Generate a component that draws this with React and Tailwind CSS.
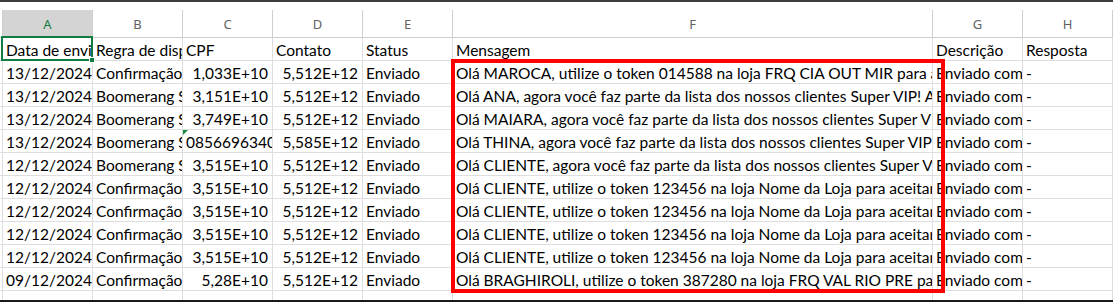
import React from 'react';

const cols = ['A', 'B', 'C', 'D', 'E', 'F', 'G', 'H'];

const rows = [
  ['13/12/2024', 'Confirmação de token', '1,033E+10', '5,512E+12', 'Enviado', 'Olá MAROCA, utilize o token 014588 na loja FRQ CIA OUT MIR para aceitar o desconto.'],
  ['13/12/2024', 'Boomerang Super VIP', '3,151E+10', '5,512E+12', 'Enviado', 'Olá ANA, agora você faz parte da lista dos nossos clientes Super VIP! Aproveite.'],
  ['13/12/2024', 'Boomerang Super VIP', '3,749E+10', '5,512E+12', 'Enviado', 'Olá MAIARA, agora você faz parte da lista dos nossos clientes Super VIP! Aproveite.'],
  ['13/12/2024', 'Boomerang Super VIP', '08566963400', '5,585E+12', 'Enviado', 'Olá THINA, agora você faz parte da lista dos nossos clientes Super VIP! Aproveite.', true],
  ['12/12/2024', 'Boomerang Super VIP', '3,515E+10', '5,512E+12', 'Enviado', 'Olá CLIENTE, agora você faz parte da lista dos nossos clientes Super VIP! Aproveite.'],
  ['12/12/2024', 'Confirmação de token', '3,515E+10', '5,512E+12', 'Enviado', 'Olá CLIENTE, utilize o token 123456 na loja Nome da Loja para aceitar o desconto.'],
  ['12/12/2024', 'Confirmação de token', '3,515E+10', '5,512E+12', 'Enviado', 'Olá CLIENTE, utilize o token 123456 na loja Nome da Loja para aceitar o desconto.'],
  ['12/12/2024', 'Confirmação de token', '3,515E+10', '5,512E+12', 'Enviado', 'Olá CLIENTE, utilize o token 123456 na loja Nome da Loja para aceitar o desconto.'],
  ['12/12/2024', 'Confirmação de token', '3,515E+10', '5,512E+12', 'Enviado', 'Olá CLIENTE, utilize o token 123456 na loja Nome da Loja para aceitar o desconto.'],
  ['09/12/2024', 'Confirmação de token', '5,28E+10', '5,512E+12', 'Enviado', 'Olá BRAGHIROLI, utilize o token 387280 na loja FRQ VAL RIO PRE para aceitar o desconto.'],
];

const grid = 'grid grid-cols-[3px_90px_90px_90px_90px_90px_480px_90px_90px]';

function Cell({ children, right, className = '' }) {
  return (
    <div
      className={`relative overflow-hidden whitespace-nowrap border-r border-b border-[#dedede] px-[3px] pt-px leading-[22px] ${right ? 'text-right pr-[4px]' : ''} ${className}`}
    >
      {children}
    </div>
  );
}

export default function App() {
  return (
    <div className="relative w-[1113px] h-[302px] overflow-hidden bg-white text-black font-['Lato',sans-serif] text-[15.5px]">
      {/* top edge */}
      <div className="h-[2px] bg-[#3c3c3c]" />
      <div className="h-[8px] bg-white" />

      {/* Column letters */}
      <div className={`${grid} h-[28px] font-['Noto_Sans',sans-serif] text-[13px] text-[#616161]`}>
        <div className="border-r border-b border-[#cfcfcf]" />
        {cols.map((c) => (
          <div
            key={c}
            className={`flex items-center justify-center pt-[2px] border-r border-b border-[#cfcfcf] ${c === 'A' ? 'bg-[#d4d4d4] text-[#107c41]' : ''}`}
          >
            {c}
          </div>
        ))}
      </div>

      {/* Header row */}
      <div className={`${grid} h-[23px]`}>
        <div className="border-r border-b border-[#dedede]" />
        <Cell>Data de envio</Cell>
        <Cell>Regra de disparo</Cell>
        <Cell>CPF</Cell>
        <Cell>Contato</Cell>
        <Cell>Status</Cell>
        <Cell>Mensagem</Cell>
        <Cell>Descrição</Cell>
        <Cell>Resposta</Cell>
      </div>

      {rows.map((r, i) => (
        <div key={i} className={`${grid} h-[23px]`}>
          <div className="border-r border-b border-[#dedede]" />
          <Cell>{r[0]}</Cell>
          <Cell>{r[1]}</Cell>
          {r[6] ? (
            <Cell>
              <span className="absolute left-0 top-0 w-0 h-0 border-t-[5px] border-r-[5px] border-t-[#1a8a3c] border-r-transparent" />
              {r[2]}
            </Cell>
          ) : (
            <Cell right>{r[2]}</Cell>
          )}
          <Cell right>{r[3]}</Cell>
          <Cell>{r[4]}</Cell>
          <Cell>{r[5]}</Cell>
          <Cell>Enviado com sucesso</Cell>
          <Cell>-</Cell>
        </div>
      ))}

      {/* partial row */}
      <div className={`${grid} h-[9px]`}>
        {Array.from({ length: 9 }).map((_, i) => (
          <div key={i} className="border-r border-[#dedede]" />
        ))}
      </div>
      <div className="h-[2px] bg-[#1a1a1a]" />

      {/* Selected cell A1 */}
      <div className="absolute left-[1px] top-[36px] w-[92px] h-[25px] border-2 border-[#107c41]" />
      <div className="absolute left-[89px] top-[57px] w-[6px] h-[6px] bg-[#107c41] border border-white" />

      {/* Red highlight box */}
      <div className="absolute left-[451px] top-[59px] w-[494px] h-[234px] border-4 border-[#ff0000]" />
    </div>
  );
}
